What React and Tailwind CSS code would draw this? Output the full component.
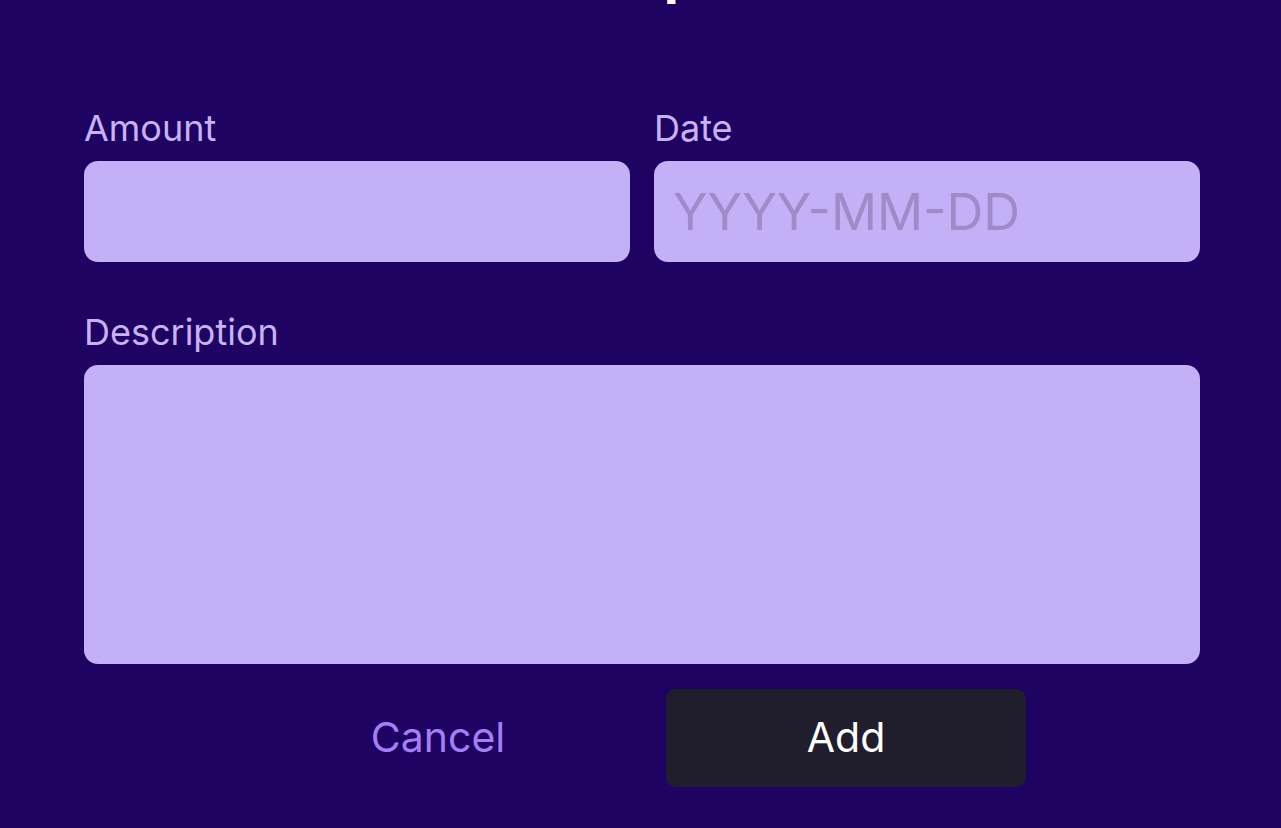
import React from "react";

export default function App() {
  const font = { fontFamily: "Inter, 'Noto Sans', sans-serif" };
  return (
    <div
      className="w-[1281px] h-[828px] overflow-hidden bg-[#1f0362] flex flex-col px-[84px]"
      style={font}
    >
      <h1 className="-mt-[56px] h-[56px] pl-[24px] text-[56px] leading-none font-bold text-white text-center">
        Add Expense
      </h1>
      <div className="mt-[108px] grid grid-cols-2 gap-[24px] w-[1116px]">
        <div className="flex flex-col">
          <label className="text-[36px] leading-[40px] text-[#c8b2f4] mb-[13px]">Amount</label>
          <div className="h-[101px] rounded-[14px] bg-[#c4b0f6]" />
        </div>
        <div className="flex flex-col">
          <label className="text-[36px] leading-[40px] text-[#c8b2f4] mb-[13px]">Date</label>
          <div className="h-[101px] rounded-[14px] bg-[#c4b0f6] flex items-center pl-[19px]">
            <span className="text-[51px] leading-none text-[#a08bc8]">YYYY-MM-DD</span>
          </div>
        </div>
      </div>
      <div className="mt-[50px] flex flex-col w-[1116px]">
        <label className="text-[36px] leading-[40px] text-[#c8b2f4] mb-[13px]">Description</label>
        <div className="h-[299px] rounded-[14px] bg-[#c4b0f6]" />
      </div>
      <div className="mt-[25px] flex justify-center gap-[48px] w-[1116px]">
        <button className="w-[360px] h-[98px] flex items-center justify-center text-[41px] text-[#a37ef4]">
          Cancel
        </button>
        <button className="w-[360px] h-[98px] rounded-[10px] bg-[#201e2c] flex items-center justify-center text-[41px] text-white">
          Add
        </button>
      </div>
    </div>
  );
}
